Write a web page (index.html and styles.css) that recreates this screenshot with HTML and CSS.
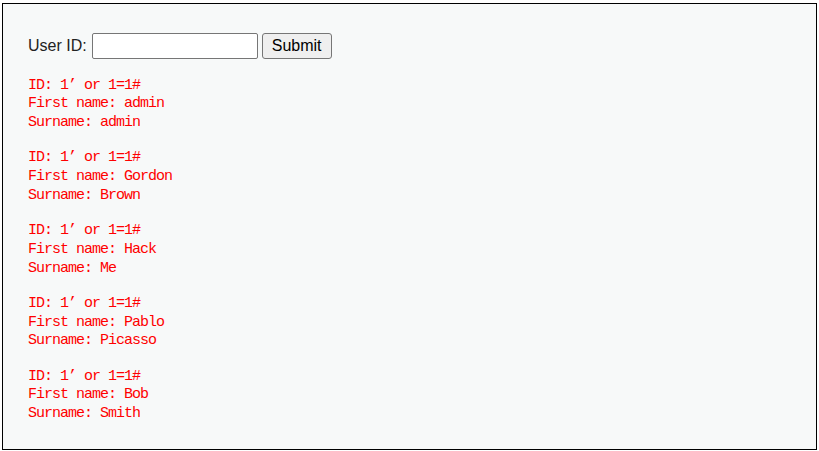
FILE: index.html
```html
<!DOCTYPE html>
<html>
<head>
<meta charset="utf-8">
<link rel="stylesheet" href="styles.css">
</head>
<body>
<div class="box">
  <form class="query">
    <label class="label" for="uid">User ID:</label>
    <input class="field" id="uid" type="text">
    <button class="submit" type="button">Submit</button>
  </form>
  <pre class="result">ID: 1’ or 1=1#
First name: admin
Surname: admin</pre>
  <pre class="result">ID: 1’ or 1=1#
First name: Gordon
Surname: Brown</pre>
  <pre class="result">ID: 1’ or 1=1#
First name: Hack
Surname: Me</pre>
  <pre class="result">ID: 1’ or 1=1#
First name: Pablo
Surname: Picasso</pre>
  <pre class="result">ID: 1’ or 1=1#
First name: Bob
Surname: Smith</pre>
</div>
</body>
</html>
```
FILE: styles.css
```css
html, body {
  margin: 0;
  padding: 0;
  background: #ffffff;
}
body {
  padding: 3px 2px 0 2px;
  width: 815px;
  box-sizing: content-box;
}
.box {
  box-sizing: border-box;
  width: 815px;
  height: 447px;
  border: 1px solid #000;
  background: #f7f9f9;
  padding: 29px 25px 0 25px;
  display: flex;
  flex-direction: column;
  align-items: flex-start;
}
.query {
  display: flex;
  align-items: center;
  height: 26px;
  margin: 0 0 1.2px 0;
  font-family: "Liberation Sans", Arial, sans-serif;
  font-size: 16px;
  color: #222;
}
.label {
  margin-right: 5px;
}
.field {
  box-sizing: border-box;
  width: 166px;
  height: 26px;
  margin: 0 4px 0 0;
  padding: 1px 2px;
  border: 1px solid #767676;
  border-radius: 2px;
  background: #fff;
  font-family: "Liberation Sans", Arial, sans-serif;
  font-size: 16px;
}
.submit {
  box-sizing: border-box;
  width: 70px;
  height: 26px;
  margin: 0;
  padding: 0;
  border: 1px solid #767676;
  border-radius: 3px;
  background: #efefef;
  color: #000;
  font-family: "Liberation Sans", Arial, sans-serif;
  font-size: 16px;
}
.result {
  margin: 16.6px 0 0 0;
  font-family: "Liberation Mono", "Courier New", monospace;
  font-size: 15px;
  letter-spacing: -1px;
  line-height: 18.7px;
  color: #ff0000;
}
```
